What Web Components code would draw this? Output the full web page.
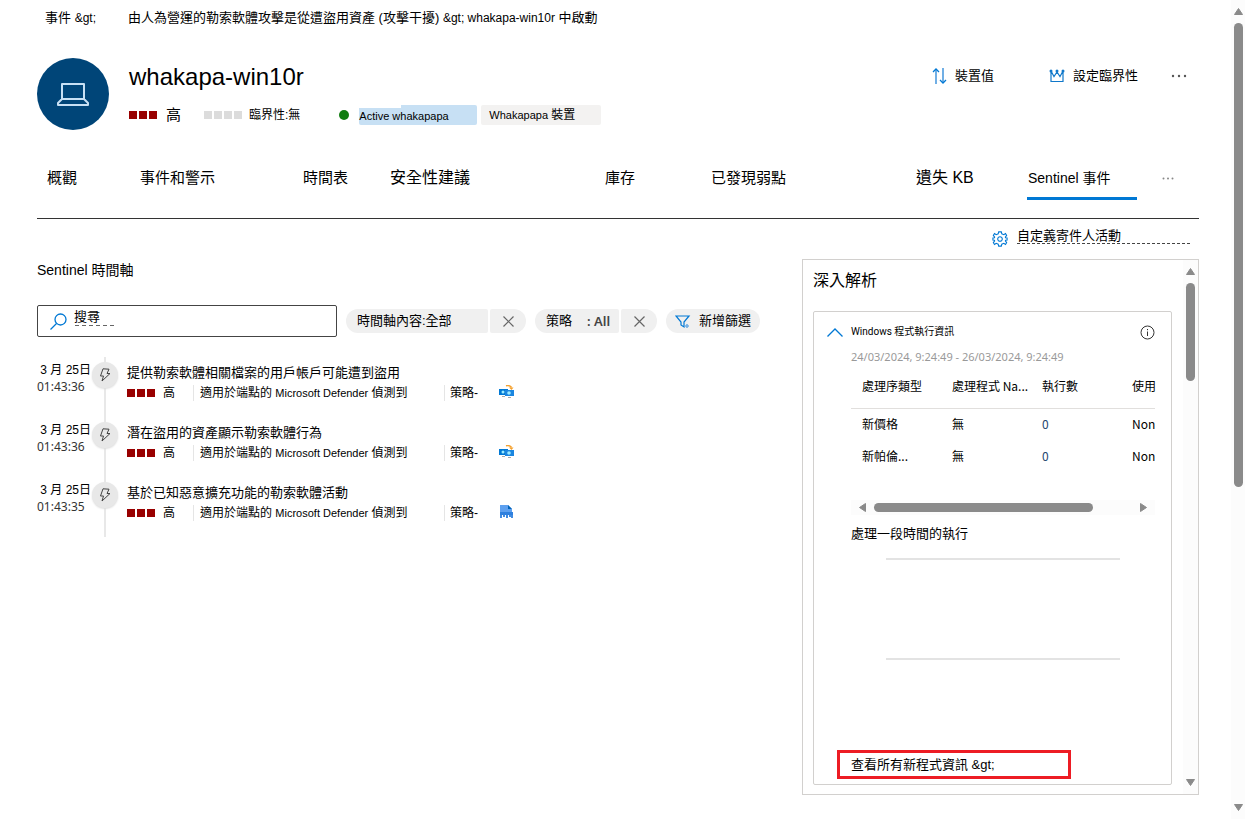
<!DOCTYPE html>
<html lang="zh-Hant">
<head>
<meta charset="utf-8">
<title>whakapa-win10r</title>
<style>
  body { margin: 0; background: #fff; color: #000; font: 13px/20px "Liberation Sans", "Noto Sans CJK TC", sans-serif; }
</style>
</head>
<body>
<device-page></device-page>
<script>
const BASE = `*{box-sizing:border-box} button{font:inherit;color:inherit;background:none;border:0;padding:0;margin:0;cursor:pointer} a{color:inherit;text-decoration:none} h1,h2,h3,p{margin:0;font-weight:400} svg{display:block;flex:none}`;

function define(name, css, html) {
  const template = document.createElement('template');
  template.innerHTML = `<style>${BASE}${css}</style>${html}`;
  customElements.define(name, class extends HTMLElement {
    constructor() {
      super();
      this.attachShadow({ mode: 'open' }).append(template.content.cloneNode(true));
    }
  });
}

define('scroll-bar', `
  :host{display:flex;flex-direction:column;align-items:center;width:15px;padding:8px 0;gap:8px;background:#fcfcfc}
  .track{flex:1;width:9px}
  .thumb{width:9px;height:var(--size);background:#8a8a8a;border-radius:5px}
  .down{transform:rotate(180deg)}
  :host([horizontal]){flex-direction:row;width:auto;height:15px;padding:0 8px}
  :host([horizontal]) .track{height:9px;width:auto}
  :host([horizontal]) .thumb{height:9px;width:var(--size)}
  :host([horizontal]) .arrow{width:7px;height:9px}
  :host([horizontal]) .v, :host(:not([horizontal])) .h{display:none}
`, `
  <svg class="arrow v" width="9" height="7"><path d="M4.500 0.500L8.500 6.500H0.500Z" fill="#8a8a8a" stroke="#8a8a8a" stroke-linejoin="round"/></svg>
  <svg class="arrow h" width="7" height="9"><path d="M0.500 4.500L6.500 0.500V8.500Z" fill="#8a8a8a" stroke="#8a8a8a" stroke-linejoin="round"/></svg>
  <div class="track"><div class="thumb"></div></div>
  <svg class="arrow v down" width="9" height="7"><path d="M4.500 0.500L8.500 6.500H0.500Z" fill="#8a8a8a" stroke="#8a8a8a" stroke-linejoin="round"/></svg>
  <svg class="arrow h down" width="7" height="9"><path d="M0.500 4.500L6.500 0.500V8.500Z" fill="#8a8a8a" stroke="#8a8a8a" stroke-linejoin="round"/></svg>
`);

define('level-squares', `
  :host{display:flex;gap:2px;color:#990000}
  :host([muted]){color:#dcdcdc}
  i{width:8px;height:8px;background:currentColor}
  i.fourth{display:none}
  :host([muted]) i.fourth{display:block}
`, `<i></i><i></i><i></i><i class="fourth"></i>`);

define('bread-crumb', `
  :host{display:block}
  nav{display:flex;align-items:center;height:36px;padding-left:8px;gap:32px;white-space:nowrap}
  .latin{font-size:12px}
`, `<nav><a href="#">事件 <span class="latin">&amp;gt;</span></a><span>由人為營運的勒索軟體攻擊是從遭盜用資產 (攻擊干擾) <span class="latin">&amp;gt; whakapa-win10r</span> 中啟動</span></nav>`);

define('device-tag', `
  :host{display:block;height:20px;padding-left:8px;line-height:20px;font-size:11px;background:#f3f2f1;border-radius:2px;width:120px;white-space:nowrap}
  :host([active]){width:118px;padding-left:0;line-height:22px;background:linear-gradient(#c7e0f4,#c7e0f4) 0 100%/42px 17px no-repeat,linear-gradient(#c7e0f4,#c7e0f4) 42px 0/76px 20px no-repeat}
`, `<slot></slot>`);

define('device-header', `
  :host{display:flex;padding:22px 12px 26px 0;gap:20px}
  .avatar{width:72px;height:72px;border-radius:50%;background:#004578;display:grid;place-items:center}
  .info{flex:1}
  h1{font-size:24px;line-height:32px;padding-top:3px}
  .meta{display:flex;align-items:center;height:20px;margin-top:12px;font-size:12px;white-space:nowrap}
  .risk{font-size:15px;margin:0 23px 0 9px}
  .crit{margin:0 39px 0 7px}
  .dot{width:10px;height:10px;border-radius:50%;background:#107c10;margin-right:10px}
  device-tag+device-tag{margin-left:4px}
  .zh{font-size:12px}
  .actions{display:flex;height:36px;align-items:center}
  .actions button{display:flex;align-items:center;gap:8px}
  .actions button+button{margin-left:55px}
  .actions button.more{margin-left:33px}
`, `
  <div class="avatar"><svg width="34" height="28" viewBox="0 0 34 28" fill="none" stroke="#c7e0f4" stroke-width="2"><path d="M6 4H28V19H6ZM6 19L2 23V25H32V23L28 19Z" stroke-linejoin="round"/></svg></div>
  <div class="info">
    <h1>whakapa-win10r</h1>
    <div class="meta"><level-squares></level-squares><span class="risk">高</span><level-squares muted></level-squares><span class="crit">臨界性:無</span><span class="dot"></span><device-tag active>Active whakapapa</device-tag><device-tag>Whakapapa <span class="zh">裝置</span></device-tag></div>
  </div>
  <div class="actions">
    <button><svg width="15" height="16" fill="none" stroke="#0078d4"><path d="M4 16V2M11 0V14" stroke="#71afe5" stroke-width="2"/><path d="M1 4L4 1L7 4M8 12L11 15L14 12" stroke-width="1.300"/></svg>裝置值</button>
    <button><svg width="16" height="14" fill="none" stroke="#1078ca" stroke-width="1.200"><path d="M2 2V12.500H14V2L11 7.500L8 3L5 7.500Z"/><g fill="#1078ca" stroke="none"><circle cx="2" cy="2" r="1.500"/><circle cx="8" cy="2" r="1.500"/><circle cx="14" cy="2" r="1.500"/></g></svg>設定臨界性</button>
    <button class="more" aria-label="更多"><svg width="16" height="4" fill="#555"><circle cx="2" cy="2" r="1.200"/><circle cx="8" cy="2" r="1.200"/><circle cx="14" cy="2" r="1.200"/></svg></button>
  </div>
`);

define('device-tabs', `
  :host{display:block;border-bottom:1px solid #333;padding-bottom:18px}
  nav{display:grid;grid-template-columns:93fr 163fr 87fr 215fr 106fr 205fr 121fr 110fr 62fr;font-size:15px;white-space:nowrap}
  a{height:44px;line-height:44px;padding-left:10px}
  a.big{font-size:16px}
  a.on{border-bottom:3px solid #0078d4;font-size:14px;padding-left:1px}
  button{display:grid;align-items:center;padding-left:25px}
`, `<nav>
  <a href="#">概觀</a><a href="#">事件和警示</a><a href="#">時間表</a><a href="#" class="big">安全性建議</a><a href="#">庫存</a><a href="#">已發現弱點</a><a href="#" class="big">遺失 KB</a><a href="#" class="on" aria-current="page">Sentinel 事件</a>
  <button aria-label="更多索引標籤"><svg width="12" height="3" fill="#888"><circle cx="1.500" cy="1.500" r="1"/><circle cx="6" cy="1.500" r="1"/><circle cx="10.500" cy="1.500" r="1"/></svg></button>
</nav>`);

define('customize-link', `
  :host{display:flex;justify-content:flex-end;height:40px;padding:8px 9px 0 0}
  a{display:flex;gap:9px}
  svg{margin-top:3px}
  span{width:173px;height:17px;line-height:18px;border-bottom:1px dashed #444}
`, `<a href="#"><svg width="16" height="18" viewBox="-9 -9 18 18" fill="none" stroke="#0078d4" stroke-width="1.200"><circle r="2.600"/><path d="M-1.500 -8H1.500L2 -5.800L4.300 -4.800L6.200 -6.200L7.500 -4L6 -2.200L6.300 -1.500L8 -1.200V1.200L6.300 1.500L6 2.200L7.500 4L6.200 6.200L4.300 4.800L2 5.800L1.500 8H-1.500L-2 5.800L-4.300 4.800L-6.200 6.200L-7.500 4L-6 2.200L-6.300 1.500L-8 1.200V-1.200L-6.300 -1.500L-6 -2.200L-7.500 -4L-6.200 -6.200L-4.300 -4.800L-2 -5.800Z"/></svg><span>自定義寄件人活動</span></a>`);

define('search-field', `
  :host{display:block;width:300px}
  label{display:flex;align-items:center;gap:7px;height:32px;border:1px solid #444;border-radius:2px;padding-left:12px}
  input{flex:1;min-width:0;height:20px;margin:0 0 8px;padding:0;border:0;outline:0;font:inherit;background:repeating-linear-gradient(90deg,#666 0 4px,transparent 4px 7px) 1px 18px/40px 1px no-repeat}
  input::placeholder{color:#000;opacity:1}
`, `<label><svg width="17" height="17" fill="none" stroke="#0078d4" stroke-width="1.300"><circle cx="10.500" cy="6.500" r="5.500"/><path d="M6.500 10.500L0.500 16.500"/></svg><input type="search" placeholder="搜尋" aria-label="搜尋"></label>`);

define('filter-chip', `
  :host{display:flex;gap:2px;height:24px;white-space:nowrap}
  button{background:#f0f0f0;height:24px;display:flex;align-items:center;justify-content:center}
  .label{border-radius:12px 2px 2px 12px;padding:0 8px 0 11px;justify-content:flex-start;width:var(--label)}
  .close{border-radius:2px 12px 12px 2px;width:36px}
`, `<button class="label"><slot></slot></button><button class="close" aria-label="移除"><svg width="11" height="11" stroke="#666" stroke-width="1.200"><path d="M0.500 0.500L10.500 10.500M10.500 0.500L0.500 10.500"/></svg></button>`);

define('add-filter', `
  :host{display:block}
  button{display:flex;align-items:center;gap:8px;height:24px;padding:0 9px;border-radius:12px;background:#f0f0f0;white-space:nowrap}
`, `<button><svg width="16" height="16" fill="none" stroke="#0078d4" stroke-width="1.200"><path d="M1 3H14L9 9V14L6 12V9Z"/><path d="M12 11V15M10 13H14" stroke="#71afe5" stroke-width="1.600"/></svg><slot></slot></button>`);

define('timeline-item', `
  :host{display:grid;grid-template-columns:54px 26px minmax(0,1fr);column-gap:1px;height:60px;background:linear-gradient(#e8e8e8,#e8e8e8) 67px 0/2px 100% no-repeat;white-space:nowrap}
  time{display:block;padding-top:5px}
  time span{display:block}
  .day{text-align:right;font-size:12px;line-height:17px}
  .clock{color:#333;font-family:"Noto Sans",sans-serif;font-size:12px;line-height:16px}
  .node{width:26px;height:26px;margin-top:5px;border-radius:50%;background:#e8e8e8;box-shadow:0 1px 2px #ddd;display:grid;place-items:center}
  .body{padding:6px 0 0 8px}
  h3{font-size:13px}
  .meta{display:flex;align-items:center;height:20px;font-size:12px}
  .sev{margin-left:8px;width:30px}
  .src{border-left:1px solid #e5e5e5;padding-left:6px;width:251px;line-height:16px}
  .latin{font-size:11px}
  .tac{border-left:1px solid #e5e5e5;padding-left:5px;width:55px;line-height:16px;font-size:12px}
`, `
  <time><span class="day"><slot name="day"></slot></span><span class="clock"><slot name="clock"></slot></span></time>
  <div class="node"><svg width="12" height="14" fill="none" stroke="#444"><path d="M4 0.800L10 1.200L8 5.500H11L3 13L4.500 8H1.500Z" stroke-linejoin="round"/></svg></div>
  <div class="body"><h3><slot></slot></h3><div class="meta"><level-squares></level-squares><span class="sev">高</span><span class="src">適用於端點的 <span class="latin">Microsoft Defender</span> 偵測到</span><span class="tac">策略-</span><slot name="icon"></slot></div></div>
`);

define('lateral-icon', `:host{display:block}`, `<svg width="16" height="16"><path d="M0 4H9V10H0Z" fill="#0078d4"/><path d="M6 5H15V11H6Z" fill="#1b86e0"/><circle cx="4" cy="7" r="1.500" fill="#9cebff"/><circle cx="10" cy="8" r="1.800" fill="#9cebff"/><path d="M3 11.500H6M9 12.500H12" stroke="#aaa"/><path d="M7 0.800Q11 0 12.500 2.500" fill="none" stroke="#f4a12f" stroke-width="1.500"/><path d="M10 2.500H14.500L12.500 5Z" fill="#f4a12f"/></svg>`);
define('impact-icon', `:host{display:block}`, `<svg width="16" height="16"><path d="M1 0H9L13 4V9H1Z" fill="#5ea0ef"/><path d="M9 0L13 4H9Z" fill="#0063b8"/><path d="M1 7H14V10H1Z" fill="#2f80de"/><path d="M2 10V13M5 10V12M8 10V13M11 10V12M13 10V13" stroke="#2f80de" stroke-width="1.800"/></svg>`);

define('sentinel-timeline', `
  :host{display:block;padding-top:1px}
  h2{font-size:14px;line-height:20px}
  .bar{display:flex;align-items:center;gap:9px;margin:25px 0 20px}
  b{font:600 13px/20px "Noto Sans",sans-serif;color:#444;margin-left:15px}
`, `
  <h2>Sentinel 時間軸</h2>
  <div class="bar"><search-field></search-field><filter-chip style="--label:142px">時間軸內容:全部</filter-chip><filter-chip style="--label:84px">策略<b>: All</b></filter-chip><add-filter>新增篩選</add-filter></div>
  <timeline-item><span slot="day">3 月 25日</span><span slot="clock">01:43:36</span>提供勒索軟體相關檔案的用戶帳戶可能遭到盜用<lateral-icon slot="icon"></lateral-icon></timeline-item>
  <timeline-item><span slot="day">3 月 25日</span><span slot="clock">01:43:36</span>潛在盜用的資產顯示勒索軟體行為<lateral-icon slot="icon"></lateral-icon></timeline-item>
  <timeline-item><span slot="day">3 月 25日</span><span slot="clock">01:43:35</span>基於已知惡意擴充功能的勒索軟體活動<impact-icon slot="icon"></impact-icon></timeline-item>
`);

define('insight-card', `
  :host{display:block;border:1px solid #d2d0ce;border-radius:2px;padding:10px 16px 5px 13px}
  header{display:flex;align-items:center;height:20px;gap:8px;font-size:10px}
  h3{flex:1;font-size:10px;font-family:Roboto,"Noto Sans CJK TC",sans-serif}
  .in{padding-left:24px}
  .date{font:11px/14px "Noto Sans",sans-serif;color:#999;padding-top:8px;white-space:nowrap}
  table{width:304px;table-layout:fixed;border-collapse:collapse;font-size:12px;font-family:"Noto Sans CJK TC",sans-serif;white-space:nowrap}
  th,td{font-weight:400;text-align:left;padding:0 0 0 11px;height:32px;line-height:20px}
  th{height:44px}
  thead tr{border-bottom:1px solid #e1dfdd}
  th:nth-child(-n+3){width:90px}
  td:nth-child(3){color:#24466f}
  scroll-bar{margin-top:28px;--size:85%}
  h4{margin:9px 0 14px;font-weight:400;font-size:13px}
  .plot{height:102px;border:solid #e3e3e3;border-width:2px 0;margin:0 35px 90px}
  .all{display:flex;align-items:center;width:234px;height:29px;border:3px solid #ed1c24;padding-left:11px;margin-left:10px;white-space:pre}
`, `
  <header><svg width="16" height="9" fill="none" stroke="#0078d4" stroke-width="1.300"><path d="M0.500 8.500L8 1L15.500 8.500"/></svg><h3>Windows 程式執行資訊</h3><button aria-label="資訊"><svg width="15" height="15" fill="none" stroke="#333"><circle cx="7.500" cy="7.500" r="6.500"/><path d="M7.500 6.500V11M7.500 4V5.200"/></svg></button></header>
  <div class="in">
    <p class="date">24/03/2024, 9:24:49 - 26/03/2024, 9:24:49</p>
    <table><thead><tr><th>處理序類型</th><th>處理程式 Na...</th><th>執行數</th><th>使用</th></tr></thead><tbody><tr><td>新價格</td><td>無</td><td>0</td><td>Non</td></tr><tr><td>新帕倫...</td><td>無</td><td>0</td><td>Non</td></tr></tbody></table>
    <scroll-bar horizontal></scroll-bar>
    <h4>處理一段時間的執行</h4>
    <div class="plot"></div>
  </div>
  <a class="all" href="#">查看所有新程式資訊 &amp;gt;</a>
`);

define('insights-panel', `
  :host{display:flex;border:1px solid #d2d0ce}
  .content{flex:1;min-width:0;padding:0 11px 9px 10px}
  h2{font-size:16px;line-height:20px;padding:11px 0 20px}
  scroll-bar{--size:20%}
`, `<div class="content"><h2>深入解析</h2><insight-card></insight-card></div><scroll-bar></scroll-bar>`);

define('device-page', `
  :host{display:flex;min-height:100vh}
  main{flex:1;min-width:0;padding:0 32px 24px 37px}
  .cols{display:grid;grid-template-columns:minmax(0,1fr) 397px;align-items:start}
  scroll-bar{width:14px;--size:60%}
`, `<main><bread-crumb></bread-crumb><device-header></device-header><device-tabs></device-tabs><customize-link></customize-link><div class="cols"><sentinel-timeline></sentinel-timeline><insights-panel></insights-panel></div></main><scroll-bar></scroll-bar>`);
</script>
</body>
</html>
